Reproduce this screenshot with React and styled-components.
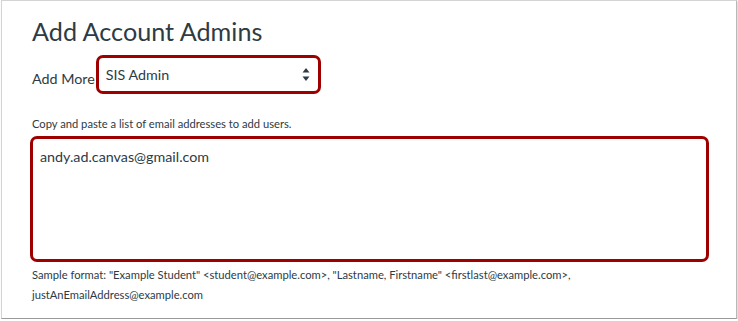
import React from 'react'
import styled, { createGlobalStyle } from 'styled-components'

const GlobalStyle = createGlobalStyle`
  body {
    margin: 0;
    background: #ffffff;
    font-family: Lato, "Open Sans", sans-serif;
    color: #2d3b45;
  }
`

const Panel = styled.div`
  box-sizing: border-box;
  width: 736px;
  height: 319px;
  margin-left: 1px;
  background: #fff;
  border: 1px solid #d4d4d4;
  border-right-color: #b8b8b8;
  border-bottom-color: #9a9a9a;
  box-shadow: 1px 1px 2px rgba(0, 0, 0, 0.18);
  padding: 15px 0 0 30px;
  display: flex;
  flex-direction: column;
`

const Title = styled.h1`
  margin: 0;
  font-size: 25.2px;
  line-height: 30px;
  font-weight: 400;
  color: #2d3b45;
`

const Row = styled.div`
  display: flex;
  align-items: flex-end;
  gap: 1px;
  margin-top: 9px;
`

const Label = styled.label`
  font-size: 14.3px;
  line-height: 18px;
  padding-bottom: 6px;
`

const Highlight = styled.div`
  box-sizing: border-box;
  border: 3px solid #9e0000;
  border-radius: 7px;
  background: #fff;
`

const Select = styled(Highlight)`
  width: 225px;
  height: 39px;
  display: flex;
  align-items: center;
  justify-content: space-between;
  padding: 0 8px 1px 7px;
  font-size: 14.3px;
`

const Help = styled.div`
  font-size: 11.2px;
  line-height: 15px;
  margin-top: ${p => p.$top || 0}px;
`

const TextArea = styled(Highlight)`
  width: 679px;
  height: 126px;
  margin-left: -2px;
  margin-top: 5px;
  padding: 9px 0 0 7px;
  font-size: 14.3px;
  line-height: 18px;
`

const Sample = styled.div`
  font-size: 11.2px;
  line-height: 20px;
  width: 680px;
  margin-top: 3px;
`

const Arrows = () => (
  <svg width="8" height="13" viewBox="0 0 8 13">
    <path d="M4 0 L7.5 4.5 H0.5 Z" fill="#2d3b45" />
    <path d="M4 13 L7.5 8.5 H0.5 Z" fill="#2d3b45" />
  </svg>
)

const App = () => {
  return (
    <>
      <GlobalStyle />
      <Panel>
        <Title>Add Account Admins</Title>
        <Row>
          <Label>Add More</Label>
          <Select>
            <span>SIS Admin</span>
            <Arrows />
          </Select>
        </Row>
        <Help $top={22}>Copy and paste a list of email addresses to add users.</Help>
        <TextArea>andy.ad.canvas@gmail.com</TextArea>
        <Sample>
          Sample format: "Example Student" &lt;student@example.com&gt;, "Lastname, Firstname" &lt;firstlast@example.com&gt;, justAnEmailAddress@example.com
        </Sample>
      </Panel>
    </>
  )
}

export default App
